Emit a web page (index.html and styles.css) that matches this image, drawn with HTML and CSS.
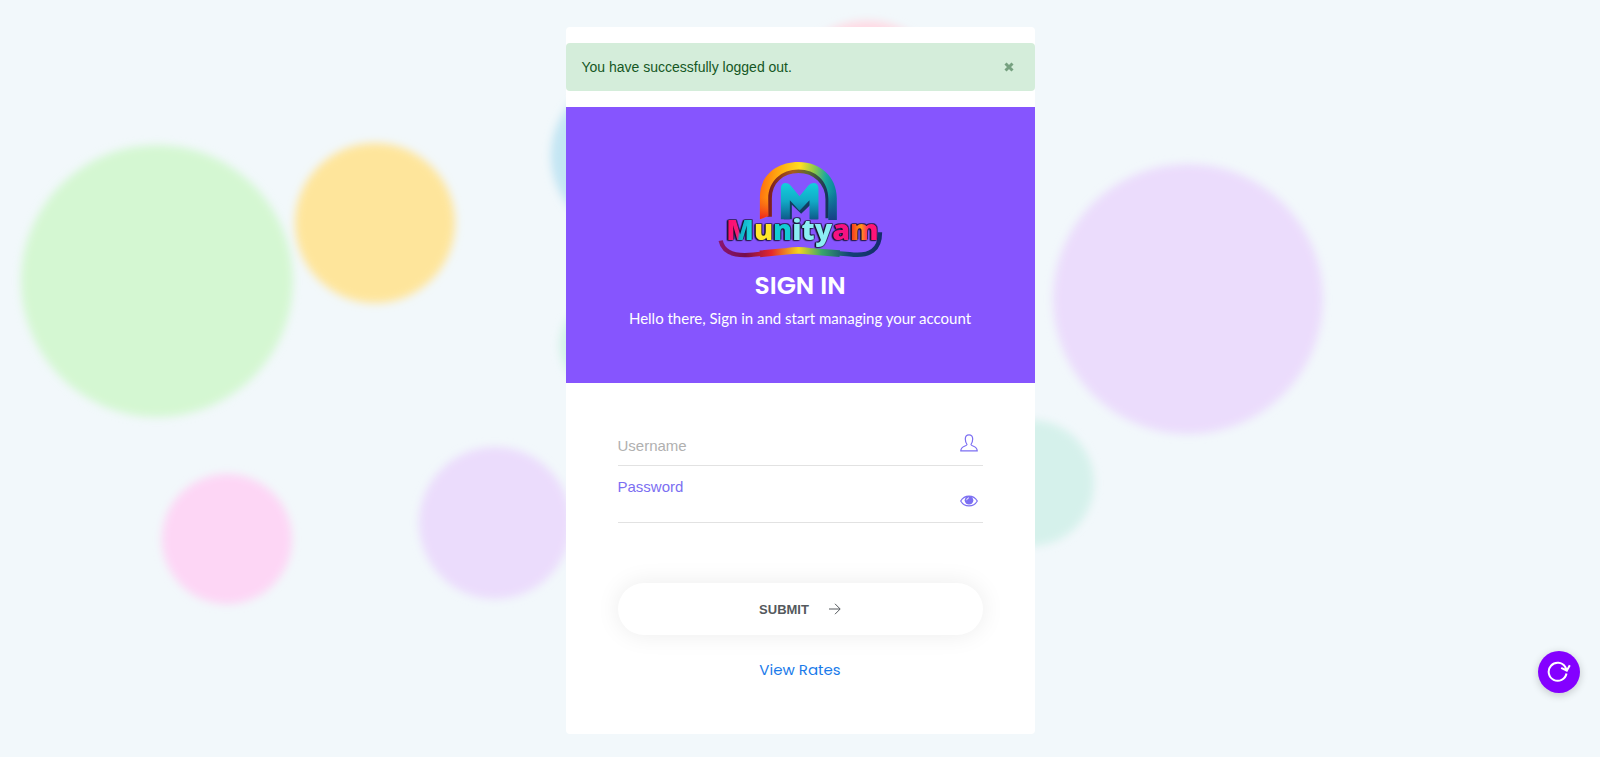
FILE: index.html
```html
<!DOCTYPE html>
<html lang="en">
<head>
<meta charset="utf-8">
<meta name="viewport" content="width=device-width, initial-scale=1">
<title>Munityam - Sign in</title>
<link rel="stylesheet" href="styles.css">
</head>
<body>
<svg class="bubbles" viewBox="0 0 1600 757" preserveAspectRatio="xMidYMid slice" aria-hidden="true">
  <defs><filter id="soft" x="-20%" y="-20%" width="140%" height="140%"><feGaussianBlur stdDeviation="4"/></filter></defs>
  <g filter="url(#soft)">
    <circle cx="157" cy="281" r="136" fill="#d4f7d2"/>
    <circle cx="375" cy="223" r="80" fill="#fee59b"/>
    <circle cx="227" cy="539" r="65" fill="#fdd6f5"/>
    <circle cx="495" cy="523" r="76" fill="#ebdcfc"/>
    <circle cx="1188" cy="299" r="135" fill="#ebdcfc"/>
    <circle cx="1031" cy="483" r="63" fill="#d5f1eb"/>
    <circle cx="631" cy="156" r="80" fill="#c3e5f3"/>
    <circle cx="608" cy="345" r="48" fill="#d0f1e6"/>
    <circle cx="867" cy="101" r="80" fill="#ffd9e3"/>
  </g>
</svg>

<main class="card">
  <div class="alert" role="status">
    <span>You have successfully logged out.</span>
    <button class="alert-close" type="button" aria-label="Close">
      <svg width="10" height="10" viewBox="0 0 10 10"><path d="M1.500 1.500l7 7M8.500 1.500l-7 7" fill="none" stroke="currentColor" stroke-width="3"/></svg>
    </button>
  </div>

  <header class="banner">
    <svg class="logo" viewBox="54 30 496 294" role="img" aria-label="Munityam">
      <defs>
        <linearGradient id="arch" x1="0" x2="1" y1="0.3" y2="0.4">
          <stop offset="0" stop-color="#ff6a10"/><stop offset=".2" stop-color="#ffa410"/><stop offset=".5" stop-color="#ffdf20"/><stop offset=".68" stop-color="#8fc94a"/><stop offset=".85" stop-color="#18a7a0"/><stop offset="1" stop-color="#0c7f9c"/>
        </linearGradient>
        <linearGradient id="archInner" x1="0" x2="1" y1="0" y2="0">
          <stop offset="0" stop-color="#7c1d20"/><stop offset=".4" stop-color="#a85a1c"/><stop offset=".65" stop-color="#5f6a30"/><stop offset="1" stop-color="#12305e"/>
        </linearGradient>
        <linearGradient id="legs" x1="0" x2="0" y1="0" y2="1">
          <stop offset=".15" stop-color="#f0501a" stop-opacity="0"/><stop offset="1" stop-color="#f0201c"/>
        </linearGradient>
        <linearGradient id="legsBlue" x1="0" x2="0" y1="0" y2="1">
          <stop offset=".15" stop-color="#124d8e" stop-opacity="0"/><stop offset="1" stop-color="#173e86"/>
        </linearGradient>
        <linearGradient id="bigM" x1="0" x2="0" y1="0" y2="1">
          <stop offset="0" stop-color="#12cfdc"/><stop offset=".5" stop-color="#12a9c6"/><stop offset="1" stop-color="#0d5a8a"/>
        </linearGradient>
        <linearGradient id="pinkTeal" gradientUnits="userSpaceOnUse" x1="80" x2="166" y1="232" y2="248">
          <stop offset="0" stop-color="#ff0a70"/><stop offset=".42" stop-color="#f41b79"/><stop offset=".5" stop-color="#10b0c8"/><stop offset="1" stop-color="#22e1e6"/>
        </linearGradient>
        <linearGradient id="hot" gradientUnits="userSpaceOnUse" x1="456" x2="536" y1="0" y2="0">
          <stop offset="0" stop-color="#f63a20"/><stop offset=".35" stop-color="#ff9a16"/><stop offset=".65" stop-color="#ff1670"/><stop offset="1" stop-color="#ff127f"/>
        </linearGradient>
        <linearGradient id="swoosh" gradientUnits="userSpaceOnUse" x1="58" x2="546" y1="0" y2="0">
          <stop offset="0" stop-color="#8a1670"/><stop offset=".16" stop-color="#760d4d"/><stop offset=".32" stop-color="#e5272b"/><stop offset=".49" stop-color="#f3d51e"/><stop offset=".63" stop-color="#38a66b"/><stop offset=".8" stop-color="#144276"/><stop offset="1" stop-color="#142c6b"/>
        </linearGradient>
      </defs>
      <path d="M208 200V144C208 94 246 61 296 61S385 98 385 148V205" fill="none" stroke="url(#archInner)" stroke-width="16"/>
      <path d="M180 208V140C180 78 229 36 296 36S411 82 411 144V210H386V148C386 92 347 58 296 58S205 93 205 146V198Z" fill="url(#arch)"/>
      <path d="M180 208V130H205V198Z" fill="url(#legs)"/>
      <path d="M386 210V110H411V210Z" fill="url(#legsBlue)"/>
      <path d="M252 208V120Q252 106 266 112L302 145 342 108Q354 106 354 120V208H332V164L304 191 276 164V208Z" fill="#123c60"/>
      <path d="M243 208V116Q243 99 258 99Q267 99 273 107L299 139 325 107Q331 99 341 99Q356 99 356 116V208H329V151L299 182 270 151V208Z" fill="url(#bigM)"/>
      <path d="M62 272C68 302 96 321 160 314L260 304Q296 299 330 304L450 313C512 321 541 300 541 247" fill="none" stroke="url(#swoosh)" stroke-width="13"/>
      <path d="M180 312L260 304Q296 299 330 304L420 311" fill="none" stroke="url(#swoosh)" stroke-width="20"/>
      <text class="wordmark" x="79" y="269"><tspan fill="url(#pinkTeal)">M</tspan><tspan fill="#ffe62c">u</tspan><tspan fill="#12cbd4">n</tspan><tspan fill="#8ceef4">ity</tspan><tspan fill="#f51281">a</tspan><tspan fill="url(#hot)">m</tspan></text>
    </svg>
    <h1 class="title">SIGN IN</h1>
    <p class="subtitle">Hello there, Sign in and start managing your account</p>
  </header>

  <form class="form">
    <div class="field">
      <input class="field-input" id="username" type="text" placeholder="Username" aria-label="Username">
      <svg class="field-icon" width="18" height="18" viewBox="0 0 18 18" aria-hidden="true"><path d="M7 10.500C7 12.500 .8 11.500 .8 16.800H17.200C17.200 11.500 11 12.500 11 10.500C12 9 12.700 7.500 12.700 5C12.700 2.300 11.300 .8 9 .8S5.300 2.300 5.300 5C5.300 7.500 6 9 7 10.500Z" fill="none" stroke="currentColor" stroke-width="1.200"/></svg>
    </div>
    <div class="field field-raised">
      <label class="field-label" for="password">Password</label>
      <input class="field-input" id="password" type="password">
      <button class="field-icon reveal" type="button" aria-label="Show password">
        <svg width="18" height="12" viewBox="0 0 18 12"><path d="M.7 6C4.500 -.6 13.500 -.6 17.300 6C13.500 12.600 4.500 12.600 .7 6Z" fill="none" stroke="currentColor" stroke-width="1.200"/><circle cx="9" cy="5.300" r="4.300" fill="currentColor"/><path d="M6.700 5.200Q6.800 3 9 2.800" fill="none" stroke="#fff" stroke-width=".9"/></svg>
      </button>
    </div>
    <button class="submit" type="submit">SUBMIT
      <svg width="12" height="12" viewBox="0 0 12 12" aria-hidden="true"><path d="M0 6H11M6 .8L11.200 6 6 11.200" fill="none" stroke="currentColor" stroke-width="1"/></svg>
    </button>
    <a class="rates" href="#">View Rates</a>
  </form>
</main>

<button class="refresh" type="button" aria-label="Reload">
  <svg width="24" height="24" viewBox="0 0 24 24"><path d="M19.500 13.500A9 9 0 1 1 18.300 7L19.600 10M14.200 7.800L19.800 10.700 22.800 5.200" fill="none" stroke="currentColor" stroke-width="2"/></svg>
</button>
</body>
</html>
```
FILE: styles.css
```css
* { box-sizing: border-box; }

body {
  margin: 0;
  min-height: 100vh;
  padding: 27px 16px 23px;
  background: #f2f8fb;
  font-family: "Liberation Sans", Arial, sans-serif;
  font-size: 14px;
}

button { padding: 0; border: 0; background: none; font: inherit; cursor: pointer; }
svg { display: block; }

.bubbles { position: fixed; inset: 0; width: 100%; height: 100%; z-index: -1; }

.card {
  max-width: 469px;
  margin: 0 auto;
  padding-top: 16px;
  background: #fff;
  border-radius: 4px;
}

.alert {
  display: flex;
  align-items: center;
  justify-content: space-between;
  min-height: 48px;
  margin-bottom: 16px;
  padding: 12px 21px 12px 16px;
  border-radius: 4px;
  background: #d4edda;
  color: #155724;
}
.alert-close { color: #76a180; }

.banner {
  display: flex;
  flex-direction: column;
  align-items: center;
  padding: 53px 16px;
  background: #8655fe;
  color: #fff;
  text-align: center;
}
.logo { width: 165px; height: 98px; }
.wordmark {
  font-family: "Open Sans", sans-serif;
  font-weight: 800;
  font-size: 86px;
  filter: drop-shadow(-2px 1px 0 #16122e) drop-shadow(-2px 1px 0 #16122e) drop-shadow(2px -2px 0 #16122e);
}
.title {
  margin: 12px 0 4px;
  font-family: Poppins, Inter, sans-serif;
  font-size: 25px;
  font-weight: 600;
  line-height: 32px;
}
.subtitle { margin: 0; font-family: Lato, sans-serif; font-size: 15px; line-height: 24px; }

.form { display: flex; flex-direction: column; padding: 43px 52px 52px; }

.field { position: relative; height: 40px; border-bottom: 1px solid #e2e2e2; }
.field-raised { height: 57px; }
.field-input {
  width: 100%;
  height: 100%;
  padding: 0 32px 0 0;
  border: 0;
  outline: 0;
  background: none;
  color: #333;
  font: inherit;
  font-size: 15px;
}
.field-input::placeholder { color: #b0b0b0; opacity: 1; }
.field-label { position: absolute; top: 12px; left: 0; color: #7c6ff2; font-size: 15px; line-height: 18px; }
.field-icon { position: absolute; right: 5px; top: 8px; color: #7c6ff2; }
.reveal { top: 29px; }

.submit {
  display: flex;
  align-items: center;
  justify-content: center;
  gap: 20px;
  height: 52px;
  margin: 60px 0 22px;
  border-radius: 26px;
  background: #fff;
  box-shadow: 0 0 24px rgba(0, 0, 0, .08);
  color: #54595d;
  font-size: 13px;
  font-weight: 700;
}
.rates {
  align-self: center;
  color: #1a7bea;
  font-family: Poppins, Inter, sans-serif;
  font-size: 15px;
  line-height: 25px;
  text-decoration: none;
}

.refresh {
  position: fixed;
  right: 20px;
  bottom: 64px;
  display: grid;
  place-items: center;
  width: 42px;
  height: 42px;
  border-radius: 50%;
  background: #8400ff;
  box-shadow: 0 2px 8px rgba(0, 0, 0, .2);
  color: #fff;
}
```
